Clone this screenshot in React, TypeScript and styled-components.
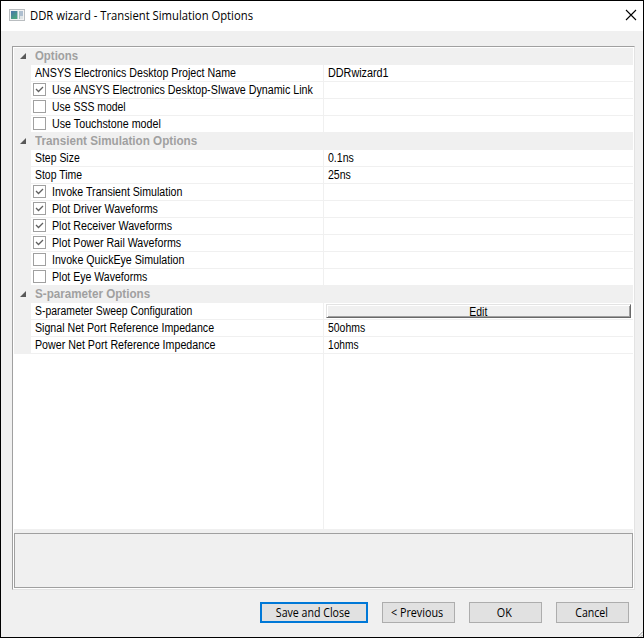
import React from "react";
import styled, { createGlobalStyle } from "styled-components";

const Global = createGlobalStyle`
  *, *::before, *::after { box-sizing: border-box; }
  html, body { margin: 0; padding: 0; overflow: hidden; }
`;

const Dialog = styled.div`
  width: 644px;
  height: 638px;
  border: 1px solid #000;
  background: #f0f0f0;
  display: flex;
  flex-direction: column;
  color: #000;
  font-family: "Open Sans", "Noto Sans", sans-serif;
  font-size: 12px;
  position: relative;
  overflow: hidden;
`;

const TitleBar = styled.header`
  height: 30px;
  flex: none;
  background: #fff;
  display: flex;
  align-items: center;
  padding: 0 6px 0 8px;

  > svg { margin-bottom: 2px; }
`;

const Title = styled.h1`
  flex: 1;
  margin: 0 0 0 5px;
  font-size: 12px;
  font-weight: 400;
  line-height: 16px;
  white-space: nowrap;
  transform: scaleX(0.938);
  transform-origin: left;
`;

const CloseButton = styled.button`
  border: 0;
  padding: 0;
  margin-bottom: 2px;
  background: none;
  display: flex;
  width: 12px;
  height: 12px;
`;

const Panel = styled.main`
  width: 623px;
  height: 544px;
  flex: none;
  margin: 15px 0 0 11px;
  border: 1px solid;
  border-color: #a0a0a0 #e3e3e3 #e3e3e3 #a0a0a0;
  background: #fff;
  padding: 1px;
  display: flex;
  flex-direction: column;
  font-family: "Liberation Sans", Arial, sans-serif;
`;

const Grid = styled.div`
  height: 481px;
  flex: none;
  display: flex;
  flex-direction: column;
`;

const SectionRow = styled.div`
  height: 17px;
  flex: none;
  background: #f0f0f0;
  display: flex;
  align-items: flex-start;
`;

const Gutter = styled.div`
  width: 17px;
  align-self: stretch;
  flex: none;
  background: #f0f0f0;
  padding: 5px 0 0 6px;

  > svg { display: block; }
`;

const SectionTitle = styled.span<{ $stretch: number }>`
  margin-left: 4px;
  font-size: 12px;
  line-height: 16px;
  font-weight: 700;
  color: #a0a0a0;
  white-space: nowrap;
  transform: scaleX(${(p) => p.$stretch});
  transform-origin: left;
`;

const Row = styled.div`
  height: 17px;
  flex: none;
  display: flex;
`;

const NameCell = styled.div`
  width: 292px;
  border-bottom: 1px solid #f0f0f0;
  display: flex;
  align-items: flex-start;
  padding-left: 2px;
`;

const ValueCell = styled.div`
  flex: 1;
  border: solid #f0f0f0;
  border-width: 0 0 1px 1px;
  display: flex;
  align-items: flex-start;
  padding-left: 4px;
`;

const Label = styled.span<{ $stretch: number; $inset: number }>`
  font-size: 12px;
  line-height: 16px;
  white-space: nowrap;
  margin-left: ${(p) => p.$inset}px;
  transform: scaleX(${(p) => p.$stretch});
  transform-origin: left;
`;

const CheckFrame = styled.span`
  width: 13px;
  height: 13px;
  flex: none;
  margin-top: 1px;
  border: 1px solid #a0a0a0;
  background: #fff;
  display: flex;
`;

const EditButton = styled.button`
  width: 305px;
  height: 14px;
  margin: 1px 0 0 -2px;
  padding: 1px 1px 0 0;
  border: 1px solid;
  border-color: #e3e3e3 #696969 #696969 #e3e3e3;
  box-shadow: inset 1px 1px #fff, inset -1px -1px #a0a0a0;
  background: #f0f0f0;
  color: #000;
  font: 12px/12px "Liberation Sans", Arial, sans-serif;
`;

const GridFill = styled.div`
  flex: 1;
  margin-left: 309px;
  border-left: 1px solid #f0f0f0;
`;

const Divider = styled.div`
  height: 4px;
  flex: none;
  background: #f0f0f0;
`;

const Description = styled.div`
  height: 55px;
  flex: none;
  border: 1px solid #a0a0a0;
  background: #f0f0f0;
`;

const Footer = styled.footer`
  display: flex;
  gap: 14px;
  padding: 12px 0 0 259px;
`;

const Button = styled.button<{ $primary?: boolean }>`
  width: ${(p) => (p.$primary ? 108 : 73)}px;
  height: 21px;
  padding: ${(p) => (p.$primary ? "1px 2px 0 0" : "1px 2px 0 0")};
  border: ${(p) => (p.$primary ? "2px solid #0078d7" : "1px solid #adadad")};
  background: #e1e1e1;
  color: #000;
  font: 12px/16px "Open Sans", "Noto Sans", sans-serif;
  white-space: nowrap;
  display: flex;
  align-items: center;
  justify-content: center;
`;

const Caption = styled.span<{ $stretch: number }>`
  display: inline-block;
  transform: scaleX(${(p) => p.$stretch});
`;

const Grip = styled.svg`
  position: absolute;
  right: 0;
  bottom: 0;
`;

const AppIcon = () => (
  <svg width="16" height="12" viewBox="0 0 16 12" shapeRendering="crispEdges">
    <defs>
      <linearGradient id="screen" x1="0" y1="0" x2="0.6" y2="1">
        <stop offset="0" stopColor="#4a74ae" />
        <stop offset="1" stopColor="#4ba67c" />
      </linearGradient>
    </defs>
    <rect x="0.5" y="0.5" width="15" height="11" fill="#f3f3f3" stroke="#b9bdc0" />
    <rect x="2" y="2" width="6" height="8" fill="url(#screen)" />
    <rect x="8" y="2" width="1" height="8" fill="#a9c3cc" />
    <rect x="10" y="2" width="1" height="8" fill="#a8c4c0" />
    <rect x="11" y="2" width="3" height="5" fill="#aebfd0" />
    <rect x="11" y="7" width="3" height="3" fill="#dfe4e6" />
  </svg>
);

const Expander = () => (
  <svg width="6" height="6" viewBox="0 0 6 6">
    <path d="M6 0V6H0Z" fill="#595959" />
  </svg>
);

const CheckMark = () => (
  <svg width="11" height="11" viewBox="0 0 11 11">
    <path d="M2 5 4.5 7.5 9 3" fill="none" stroke="#606060" strokeWidth="1.3" />
  </svg>
);

type Item = {
  name: string;
  stretch: number;
  value?: string;
  valueStretch?: number;
  checked?: boolean;
  action?: string;
};
type Section = { title: string; stretch: number; items: Item[] };

const sections: Section[] = [
  {
    title: "Options",
    stretch: 0.95,
    items: [
      { name: "ANSYS Electronics Desktop Project Name", stretch: 0.889, value: "DDRwizard1", valueStretch: 0.9 },
      { name: "Use ANSYS Electronics Desktop-SIwave Dynamic Link", stretch: 0.891, checked: true },
      { name: "Use SSS model", stretch: 0.87, checked: false },
      { name: "Use Touchstone model", stretch: 0.893, checked: false },
    ],
  },
  {
    title: "Transient Simulation Options",
    stretch: 0.973,
    items: [
      { name: "Step Size", stretch: 0.87, value: "0.1ns", valueStretch: 0.88 },
      { name: "Stop Time", stretch: 0.87, value: "25ns", valueStretch: 0.88 },
      { name: "Invoke Transient Simulation", stretch: 0.884, checked: true },
      { name: "Plot Driver Waveforms", stretch: 0.885, checked: true },
      { name: "Plot Receiver Waveforms", stretch: 0.89, checked: true },
      { name: "Plot Power Rail Waveforms", stretch: 0.887, checked: true },
      { name: "Invoke QuickEye Simulation", stretch: 0.886, checked: false },
      { name: "Plot Eye Waveforms", stretch: 0.88, checked: false },
    ],
  },
  {
    title: "S-parameter Options",
    stretch: 0.97,
    items: [
      { name: "S-parameter Sweep Configuration", stretch: 0.867, action: "Edit" },
      { name: "Signal Net Port Reference Impedance", stretch: 0.886, value: "50ohms", valueStretch: 0.87 },
      { name: "Power Net Port Reference Impedance", stretch: 0.89, value: "1ohms", valueStretch: 0.85 },
    ],
  },
];

const PropertyRow = ({ item }: { item: Item }) => {
  const isCheck = item.checked !== undefined;
  return (
    <Row>
      <Gutter />
      <NameCell>
        {isCheck && <CheckFrame>{item.checked && <CheckMark />}</CheckFrame>}
        <Label $stretch={item.stretch} $inset={isCheck ? 6 : 2}>{item.name}</Label>
      </NameCell>
      <ValueCell>
        {item.value && <Label $stretch={item.valueStretch ?? 1} $inset={0}>{item.value}</Label>}
        {item.action && (
          <EditButton><Caption $stretch={0.87}>{item.action}</Caption></EditButton>
        )}
      </ValueCell>
    </Row>
  );
};

export default function App() {
  return (
    <>
      <Global />
      <Dialog>
        <TitleBar>
          <AppIcon />
          <Title>DDR wizard - Transient Simulation Options</Title>
          <CloseButton aria-label="Close">
            <svg width="12" height="12" viewBox="0 0 12 12">
              <path d="M1 1 11 11M11 1 1 11" stroke="#000" strokeWidth="1.1" />
            </svg>
          </CloseButton>
        </TitleBar>
        <Panel>
          <Grid>
            {sections.map((s) => (
              <React.Fragment key={s.title}>
                <SectionRow>
                  <Gutter><Expander /></Gutter>
                  <SectionTitle $stretch={s.stretch}>{s.title}</SectionTitle>
                </SectionRow>
                {s.items.map((it) => <PropertyRow key={it.name} item={it} />)}
              </React.Fragment>
            ))}
            <GridFill />
          </Grid>
          <Divider />
          <Description />
        </Panel>
        <Footer>
          <Button $primary><Caption $stretch={0.885}>Save and Close</Caption></Button>
          <Button><Caption $stretch={0.9}>&lt; Previous</Caption></Button>
          <Button><Caption $stretch={0.9}>OK</Caption></Button>
          <Button><Caption $stretch={0.88}>Cancel</Caption></Button>
        </Footer>
        <Grip width="6" height="6" viewBox="0 0 6 6">
          <path d="M0 5 5 0M3 6 6 3" stroke="#fff" />
          <path d="M0.5 6 6 0.5M3.5 6 6 3.5" stroke="#a0a0a0" />
        </Grip>
      </Dialog>
    </>
  );
}
